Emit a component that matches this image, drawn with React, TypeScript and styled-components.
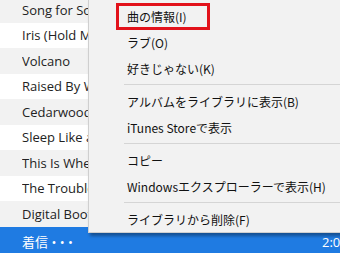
import { styled, createGlobalStyle } from "styled-components";

const GlobalStyle = createGlobalStyle`
  html, body {
    margin: 0;
    padding: 0;
    background: #ffffff;
    overflow: hidden;
  }
`;

type Song = {
  title: string;
  time: string;
};

const songs: Song[] = [
  { title: "Song for Some", time: "3:46" },
  { title: "Iris (Hold Me", time: "5:19" },
  { title: "Volcano", time: "3:14" },
  { title: "Raised By Wo", time: "4:05" },
  { title: "Cedarwood R", time: "4:25" },
  { title: "Sleep Like a", time: "5:01" },
  { title: "This Is Wher", time: "5:05" },
  { title: "The Troubles", time: "4:45" },
  { title: "Digital Booty", time: "3:22" },
  { title: "着信 • • •", time: "2:03" },
];

type MenuEntry = { label: string; boxed?: boolean } | "sep";

const menu: MenuEntry[] = [
  { label: "曲の情報(I)", boxed: true },
  { label: "ラブ(O)" },
  { label: "好きじゃない(K)" },
  "sep",
  { label: "アルバムをライブラリに表示(B)" },
  { label: "iTunes Storeで表示" },
  "sep",
  { label: "コピー" },
  { label: "Windowsエクスプローラーで表示(H)" },
  "sep",
  { label: "ライブラリから削除(F)" },
];

const App = () => {
  const selected = songs.length - 1;

  return (
    <Screen>
      <GlobalStyle />
      <SongList>
        {songs.map((song, i) => (
          <Row key={song.title} $striped={i % 2 === 0} $selected={i === selected}>
            {/* タイトル列はメニューの縁(88px)で切れて見える */}
            <Title>{song.title}</Title>
            {/* 選択行の再生時間だけがメニューの外に見える */}
            {i === selected && <Time>{song.time}</Time>}
          </Row>
        ))}
      </SongList>

      <ContextMenu>
        {menu.map((entry, i) =>
          entry === "sep" ? (
            <Separator key={i} />
          ) : (
            <Item key={i}>
              {entry.boxed ? <BoxedLabel>{entry.label}</BoxedLabel> : entry.label}
            </Item>
          )
        )}
      </ContextMenu>
    </Screen>
  );
};

export default App;

const Screen = styled.div`
  position: relative;
  width: 340px;
  height: 253px;
  overflow: hidden;
  background: #1f7be2;
`;

const SongList = styled.div`
  display: flex;
  flex-direction: column;
  margin-top: -3px;
`;

const Row = styled.div<{ $striped: boolean; $selected: boolean }>`
  display: flex;
  align-items: center;
  height: 25.5px;
  padding-left: 22px;
  background: ${(p) => (p.$selected ? "#1f7be2" : p.$striped ? "#f2f2f2" : "#ffffff")};
  color: ${(p) => (p.$selected ? "#ffffff" : "#222222")};
  font-family: "Open Sans", "Noto Sans CJK JP", sans-serif;
  font-size: 13px;
  white-space: nowrap;

  &:last-child {
    height: 30px;
    padding-bottom: 2px;
  }
`;

const Title = styled.div`
  flex: 0 0 66px;
  overflow: hidden;
`;

const Time = styled.div`
  margin-left: auto;
  width: 18px;
  overflow: hidden;
`;

const ContextMenu = styled.div`
  position: absolute;
  left: 88px;
  top: 0;
  width: 270px;
  height: 233px;
  box-sizing: border-box;
  padding-top: 3px;
  background: #f2f2f2;
  border-left: 1px solid #cfcfcf;
  border-bottom: 1px solid #cfcfcf;
  box-shadow: 2px 3px 3px rgba(0, 0, 0, 0.35);
  display: flex;
  flex-direction: column;
`;

const Item = styled.div`
  display: flex;
  align-items: center;
  height: 26px;
  padding-left: 38px;
  font-family: "Noto Sans CJK JP", sans-serif;
  font-size: 12px;
  color: #111111;
  white-space: nowrap;
`;

const BoxedLabel = styled.span`
  display: inline-block;
  width: 72px;
  margin-left: -11px;
  padding: 3px 8px;
  line-height: 15px;
  border: 3px solid #e2121b;
`;

const Separator = styled.div`
  height: 1px;
  margin: 3px 0 3px 35px;
  background: #d5d5d5;
`;
